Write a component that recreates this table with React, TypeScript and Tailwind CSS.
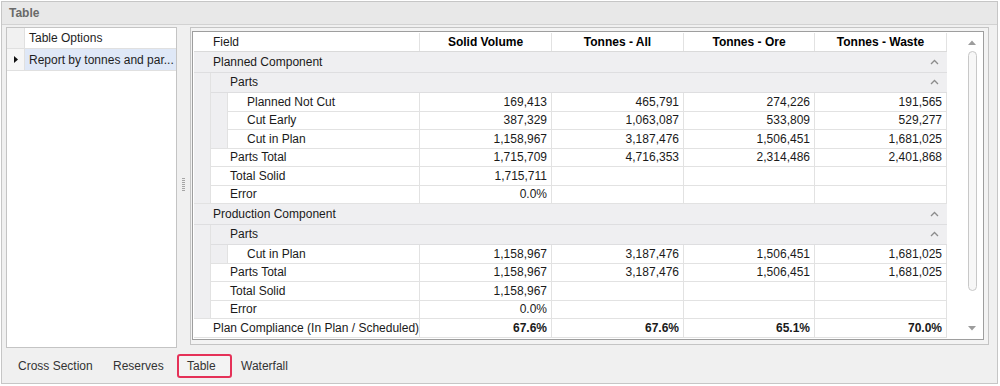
import React from "react";

type Vals = [string, string, string, string];

const FIELD_W: Record<number, string> = {
  0: "w-[226px]",
  1: "w-[209px]",
  2: "w-[192px]",
};

function Chevron() {
  return (
    <svg width="9" height="6" viewBox="0 0 9 6" className="mr-[8px]">
      <polyline
        points="1,5 4.5,1.5 8,5"
        fill="none"
        stroke="#8c8c8c"
        strokeWidth="1.3"
      />
    </svg>
  );
}

function GroupRow({ label }: { label: string }) {
  return (
    <div className="flex h-[20.5px] items-center justify-between border-b border-[#dedee0] bg-[#efeff1] pl-[19px]">
      <span className="whitespace-nowrap">{label}</span>
      <Chevron />
    </div>
  );
}

function ValueCells({ vals, bold }: { vals: Vals; bold?: boolean }) {
  const widths = ["w-[132px]", "w-[132px]", "w-[131px]", "w-[132px]"];
  return (
    <>
      {vals.map((v, i) => (
        <div
          key={i}
          className={`${widths[i]} flex items-center justify-end border-r border-[#e2e2e2] pr-[4px] ${
            bold ? "font-bold" : ""
          }`}
        >
          {v}
        </div>
      ))}
    </>
  );
}

function DataRow({
  label,
  level,
  vals,
  bold,
}: {
  label: string;
  level: number;
  vals: Vals;
  bold?: boolean;
}) {
  return (
    <div className="flex h-[18.5px] border-b border-[#e2e2e2] bg-white">
      <div
        className={`${FIELD_W[level]} flex shrink-0 items-center overflow-hidden whitespace-nowrap border-r border-[#e2e2e2] pl-[19px]`}
      >
        {label}
      </div>
      <ValueCells vals={vals} bold={bold} />
    </div>
  );
}

// indented block: gray band on the left, child rows on the right
function Indent({ children }: { children: React.ReactNode }) {
  return (
    <div className="flex">
      <div className="w-[17px] shrink-0 border-r border-b border-[#e2e2e2] bg-[#efeff1]" />
      <div className="flex-1">{children}</div>
    </div>
  );
}

const planned = {
  notCut: ["169,413", "465,791", "274,226", "191,565"] as Vals,
  early: ["387,329", "1,063,087", "533,809", "529,277"] as Vals,
  inPlan: ["1,158,967", "3,187,476", "1,506,451", "1,681,025"] as Vals,
  total: ["1,715,709", "4,716,353", "2,314,486", "2,401,868"] as Vals,
  solid: ["1,715,711", "", "", ""] as Vals,
  error: ["0.0%", "", "", ""] as Vals,
};

const production = {
  inPlan: ["1,158,967", "3,187,476", "1,506,451", "1,681,025"] as Vals,
  total: ["1,158,967", "3,187,476", "1,506,451", "1,681,025"] as Vals,
  solid: ["1,158,967", "", "", ""] as Vals,
  error: ["0.0%", "", "", ""] as Vals,
};

function ReportGrid() {
  return (
    <div className="w-[753px] text-[12px] text-[#1a1a1a]">
      {/* Column headers */}
      <div className="flex h-[19px] border-b border-[#dadada] bg-white">
        <div className="flex w-[226px] items-center border-r border-[#e2e2e2] pl-[19px]">
          Field
        </div>
        {["Solid Volume", "Tonnes - All", "Tonnes - Ore", "Tonnes - Waste"].map(
          (h, i) => (
            <div
              key={h}
              className={`${
                i === 2 ? "w-[131px]" : "w-[132px]"
              } flex items-center justify-center border-r border-[#e2e2e2] font-bold text-black`}
            >
              {h}
            </div>
          )
        )}
      </div>

      <GroupRow label="Planned Component" />
      <Indent>
        <GroupRow label="Parts" />
        <Indent>
          <DataRow label="Planned Not Cut" level={2} vals={planned.notCut} />
          <DataRow label="Cut Early" level={2} vals={planned.early} />
          <DataRow label="Cut in Plan" level={2} vals={planned.inPlan} />
        </Indent>
        <DataRow label="Parts Total" level={1} vals={planned.total} />
        <DataRow label="Total Solid" level={1} vals={planned.solid} />
        <DataRow label="Error" level={1} vals={planned.error} />
      </Indent>

      <GroupRow label="Production Component" />
      <Indent>
        <GroupRow label="Parts" />
        <Indent>
          <DataRow label="Cut in Plan" level={2} vals={production.inPlan} />
        </Indent>
        <DataRow label="Parts Total" level={1} vals={production.total} />
        <DataRow label="Total Solid" level={1} vals={production.solid} />
        <DataRow label="Error" level={1} vals={production.error} />
      </Indent>

      <DataRow
        label="Plan Compliance (In Plan / Scheduled)"
        level={0}
        vals={["67.6%", "67.6%", "65.1%", "70.0%"]}
        bold
      />
    </div>
  );
}

function ScrollBar() {
  return (
    <div className="flex w-[18px] flex-col items-center bg-white pt-[7px]">
      <svg width="8" height="5" viewBox="0 0 8 5">
        <polygon points="0,5 4,0.5 8,5" fill="#9c9c9c" />
      </svg>
      <div className="mt-[6px] h-[240px] w-[9px] rounded-full border border-[#c8c8c8] bg-[#f7f7f7]" />
      <div className="flex-1" />
      <svg width="8" height="5" viewBox="0 0 8 5" className="mb-[8px]">
        <polygon points="0,0 4,4.5 8,0" fill="#9c9c9c" />
      </svg>
    </div>
  );
}

function OptionsPanel() {
  return (
    <div className="h-[321px] w-[171px] border border-[#c4c4c4] bg-white text-[12px] text-[#1e1e1e]">
      <div className="flex h-[21px] border-b border-[#e0e0e0]">
        <div className="w-[18px] border-r border-[#e0e0e0] bg-[#f1f1f1]" />
        <div className="flex items-center pl-[4px]">Table Options</div>
      </div>
      <div className="flex h-[22px] border-b border-[#e0e0e0] bg-[#dfe8f7]">
        <div className="flex w-[18px] items-center justify-center border-r border-[#e0e0e0] bg-[#f6f6f6]">
          <svg width="4" height="7" viewBox="0 0 4 7">
            <polygon points="0,0 4,3.5 0,7" fill="#111" />
          </svg>
        </div>
        <div className="flex items-center whitespace-nowrap pl-[4px]">
          Report by tonnes and par...
        </div>
      </div>
    </div>
  );
}

function Splitter() {
  return (
    <div className="flex w-[13px] items-center justify-center">
      <div className="flex flex-col gap-[1px] pb-[6px]">
        {[0, 1, 2, 3, 4, 5, 6].map((i) => (
          <div key={i} className="h-[1px] w-[3px] bg-[#a5a5a5]" />
        ))}
      </div>
    </div>
  );
}

export default function App() {
  return (
    <div className="h-[386px] w-[1000px] overflow-hidden bg-white pt-[1px] pl-[1px] font-['Liberation_Sans',Arial,sans-serif]">
      <div className="flex h-[383px] w-[997px] flex-col border border-[#c6c6c6] bg-[#f0f0f0]">
        {/* Title bar */}
        <div className="flex h-[23px] items-center border-b border-[#d2d2d2] bg-[#e8e8e8] pl-[7px] text-[12px] font-bold text-[#6a6a6a]">
          Table
        </div>

        {/* Body */}
        <div className="flex h-[323px] pt-[2px] pl-[4px]">
          <OptionsPanel />
          <Splitter />
          <div className="h-[318px] w-[799px] border border-[#c4c4c4] bg-[#f3f3f3] pt-[3px] pr-[4px] pb-[4px] pl-[1px]">
            <div className="flex h-full border border-[#9e9e9e] bg-white pt-[1px] pl-[1px]">
              <ReportGrid />
              <div className="w-[16px] bg-white" />
              <ScrollBar />
            </div>
          </div>
        </div>

        {/* Bottom tabs */}
        <div className="flex h-[34px] items-start pt-[6px] pl-[4px] text-[12px] text-[#333]">
          <div className="flex h-[24px] w-[95px] items-center pl-[12px]">
            Cross Section
          </div>
          <div className="flex h-[24px] w-[76px] items-center pl-[12px]">
            Reserves
          </div>
          <div className="flex h-[24px] w-[55px] items-center rounded-[3px] border-2 border-[#e53158] bg-[#f3f3f3] pl-[8px]">
            Table
          </div>
          <div className="flex h-[24px] items-center pl-[9px]">Waterfall</div>
        </div>
      </div>
    </div>
  );
}
